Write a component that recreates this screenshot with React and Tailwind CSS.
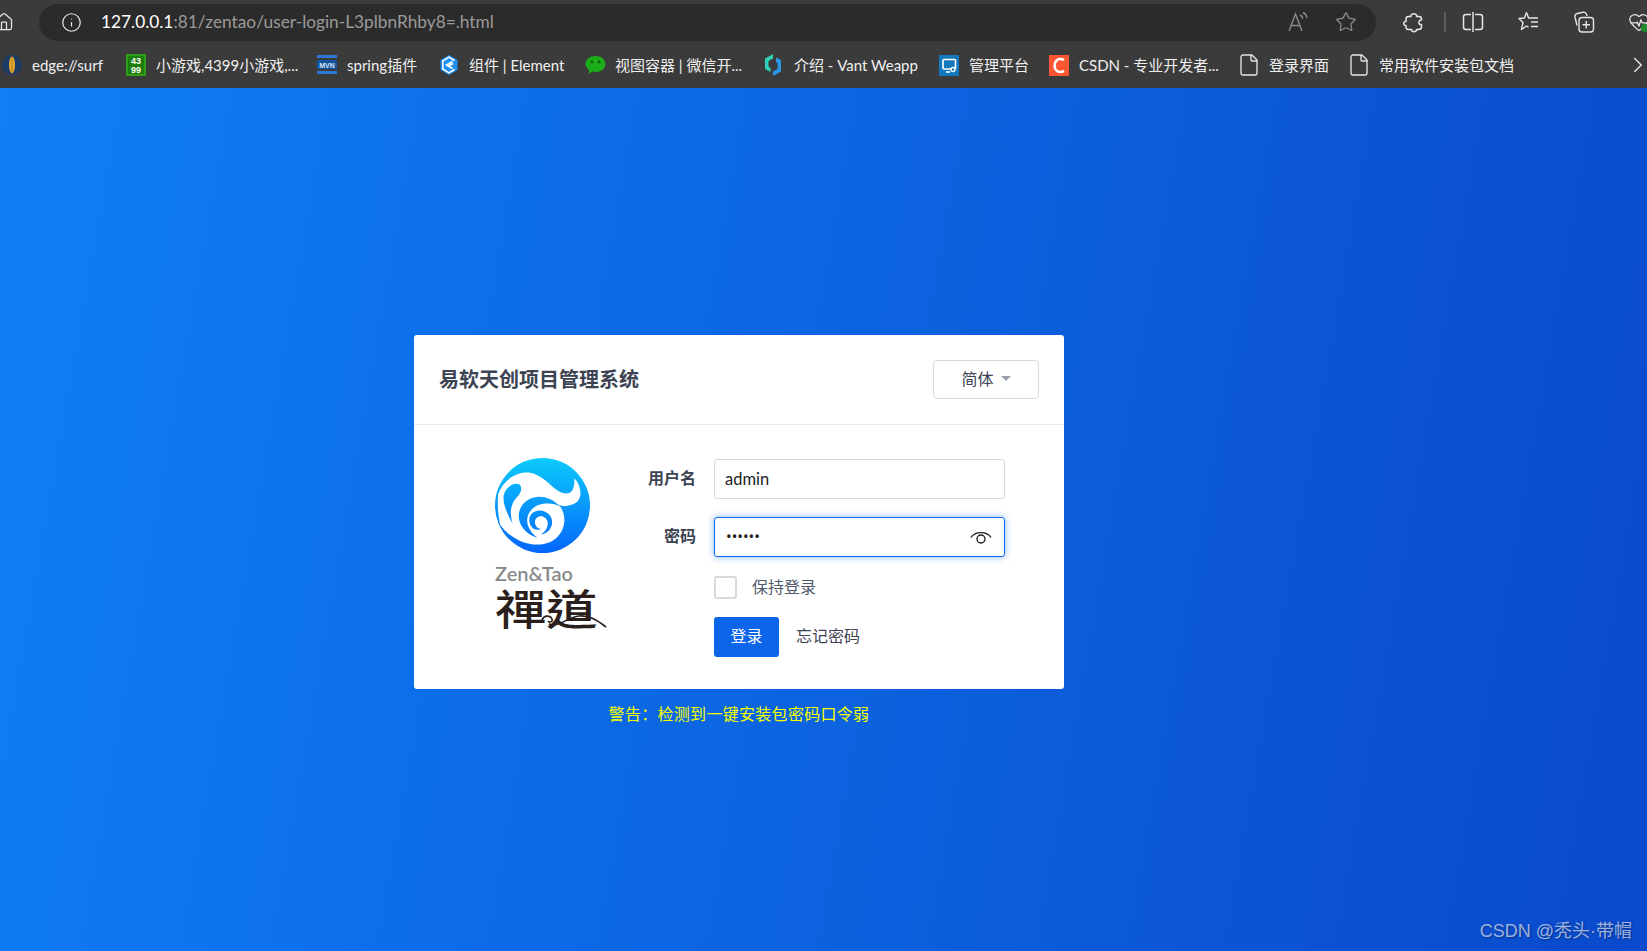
import { Home, Info, Star, ChevronRight, File, HeartPulse } from 'lucide-react';

function SurfIcon() {
  return (
    <svg width="20" height="20" viewBox="0 0 20 20">
      <circle cx="10" cy="10" r="10" fill="#1c3a63" />
      <ellipse cx="10" cy="10" rx="3" ry="8.5" fill="#e0a92c" />
      <line x1="10" y1="2" x2="10" y2="18" stroke="#a97a14" strokeWidth="0.8" />
    </svg>
  );
}

function GameIcon() {
  return (
    <svg width="20" height="22" viewBox="0 0 20 22">
      <rect width="20" height="22" fill="#2f9e16" />
      <rect x="2" y="2" width="16" height="18" fill="#1d7d0a" />
      <text x="10" y="10" fontSize="9" fontWeight="700" fill="#fff" textAnchor="middle" fontFamily="Liberation Sans">43</text>
      <text x="10" y="19" fontSize="9" fontWeight="700" fill="#fff" textAnchor="middle" fontFamily="Liberation Sans">99</text>
    </svg>
  );
}

function MavenIcon() {
  return (
    <svg width="20" height="20" viewBox="0 0 20 20">
      <rect y="0" width="20" height="3" fill="#2a78d6" />
      <rect y="16" width="20" height="3" fill="#2a78d6" />
      <rect y="5" width="20" height="9" fill="#12539b" />
      <text x="10" y="12.5" fontSize="7" fontWeight="700" fill="#d5e6fa" textAnchor="middle" fontFamily="Liberation Sans">MVN</text>
    </svg>
  );
}

function ElementIcon() {
  return (
    <svg width="20" height="22" viewBox="0 0 20 22">
      <path d="M10 1 L18.5 6 V16 L10 21 L1.5 16 V6 Z" fill="#1e8ff5" />
      <path d="M15.5 6.5 L10 3.2 L3.8 7 V15 L10 18.8 L15.5 15.5" stroke="#fff" strokeWidth="1.5" fill="none" />
      <path d="M13.5 7.5 L7.5 11 L13.5 14.5 M9.5 12 L14 9.5" stroke="#fff" strokeWidth="1.6" fill="none" />
    </svg>
  );
}

function WechatIcon() {
  return (
    <svg width="21" height="20" viewBox="0 0 21 20">
      <path d="M10.5 1 C16 1 20.5 4.4 20.5 9 C20.5 13.6 16 17 10.5 17 C9.4 17 8.4 16.9 7.4 16.6 L3.5 19 L4.2 15 C2 13.5 0.5 11.4 0.5 9 C0.5 4.4 5 1 10.5 1 Z" fill="#1aad19" />
      <circle cx="7" cy="7" r="1.4" fill="#0b5f0a" />
      <circle cx="14" cy="7" r="1.4" fill="#0b5f0a" />
    </svg>
  );
}

function VantIcon() {
  return (
    <svg width="18" height="22" viewBox="0 0 18 22">
      <path d="M9 0 L1 4.5 V15 L6.5 18 V14 L4.5 12.5 V7 L9 4.5 Z" fill="#2fd0b5" />
      <path d="M9 22 L17 17.5 V6 L12 3.5 V8 L13.5 9 V15 L9 17.5 Z" fill="#2a96e8" />
    </svg>
  );
}

function AdminIcon() {
  return (
    <svg width="20" height="21" viewBox="0 0 20 21">
      <rect width="20" height="21" fill="#1478be" />
      <rect x="4" y="4.5" width="12.5" height="9.5" rx="1" fill="none" stroke="#fff" strokeWidth="1.6" />
      <path d="M7 17 H11" stroke="#fff" strokeWidth="1.6" />
      <circle cx="14" cy="14.5" r="2" fill="#1478be" stroke="#fff" strokeWidth="1.3" />
    </svg>
  );
}

function CsdnIcon() {
  return (
    <svg width="20" height="21" viewBox="0 0 20 21">
      <rect width="20" height="21" fill="#fc5531" />
      <path d="M15 5.2 C13.8 4.4 12.6 4 11.2 4 C8 4 5.6 6.6 5.6 10.5 C5.6 14.4 8 17 11.2 17 C12.6 17 13.8 16.6 15 15.8" fill="none" stroke="#fff" strokeWidth="2.6" />
    </svg>
  );
}

function DocIcon() {
  return <File size={24} strokeWidth={1.3} className="-ml-[2px] text-[#e6e6e6]" />;
}

const BOOKMARKS = [
  { label: 'edge://surf', icon: <SurfIcon />, width: 'w-[124px]' },
  { label: '小游戏,4399小游戏,...', icon: <GameIcon />, width: 'w-[191px]' },
  { label: 'spring插件', icon: <MavenIcon />, width: 'w-[122px]' },
  { label: '组件 | Element', icon: <ElementIcon />, width: 'w-[146px]' },
  { label: '视图容器 | 微信开...', icon: <WechatIcon />, width: 'w-[179px]' },
  { label: '介绍 - Vant Weapp', icon: <VantIcon />, width: 'w-[175px]' },
  { label: '管理平台', icon: <AdminIcon />, width: 'w-[110px]' },
  { label: 'CSDN - 专业开发者...', icon: <CsdnIcon />, width: 'w-[190px]' },
  { label: '登录界面', icon: <DocIcon />, width: 'w-[110px]' },
  { label: '常用软件安装包文档', icon: <DocIcon />, width: 'w-[270px]' },
];

function ReadAloudIcon() {
  return (
    <svg width="24" height="24" viewBox="0 0 24 24" fill="none" stroke="#8b8b8b" strokeWidth="1.4">
      <path d="M3 21 L9.5 4 L16 21 M5.2 15.5 H13.8" />
      <path d="M14 5 C15.6 5.6 16.6 7 16.8 8.6 M17 2.5 C19.3 3.6 20.7 5.6 21 8.2" />
    </svg>
  );
}

function PuzzleIcon() {
  return (
    <svg width="22" height="22" viewBox="0 0 22 22" fill="none" stroke="#e6e6e6" strokeWidth="1.5" strokeLinejoin="round">
      <path d="M5.5 5.5 H8 C7 2 14.5 1.5 13.5 5.5 H15.5 Q18.5 5.5 18.5 8 V9 C15 8.5 15 14.5 18.5 13.5 V16 Q18.5 18.5 15.5 18.5 H13.5 C14 21.5 8 21.5 8.5 18.5 H5.5 Q3 18.5 3 16 V14.5 C0 15 0 10 3 10.5 V8 Q3 5.5 5.5 5.5 Z" />
    </svg>
  );
}

function SplitIcon() {
  return (
    <svg width="22" height="22" viewBox="0 0 22 22" fill="none" stroke="#e6e6e6" strokeWidth="1.5">
      <path d="M9 3.5 H4 A2.5 2.5 0 0 0 1.5 6 V16 A2.5 2.5 0 0 0 4 18.5 H9 M13 3.5 H18 A2.5 2.5 0 0 1 20.5 6 V16 A2.5 2.5 0 0 1 18 18.5 H13" />
      <path d="M11 1 V21" />
    </svg>
  );
}

function FavoritesIcon() {
  return (
    <svg width="22" height="22" viewBox="0 0 22 22" fill="none" stroke="#e6e6e6" strokeWidth="1.4" strokeLinejoin="round">
      <path d="M8.5 1.5 L10.6 7 H20" />
      <path d="M8.5 1.5 L6.4 7 L1 7.5 L5 11.5 L3.5 18.5 L8.5 15 L10.5 16.2" />
      <path d="M13 11 H20 M13 15.5 H20" />
    </svg>
  );
}

function CollectionsIcon() {
  return (
    <svg width="22" height="22" viewBox="0 0 22 22" fill="none" stroke="#e6e6e6" strokeWidth="1.4">
      <path d="M4 14.5 L2 6 A3 3 0 0 1 4.2 2.5 L10 1.2 A3 3 0 0 1 13.5 3.2 L14 5" />
      <rect x="6" y="6.5" width="14.5" height="14.5" rx="3" />
      <path d="M13.2 10 V17.5 M9.5 13.8 H17" />
    </svg>
  );
}

function EyeIcon() {
  return (
    <svg width="22" height="15" viewBox="0 0 22 15" fill="none" stroke="#222" strokeWidth="1.4">
      <path d="M1 7.5 C5 1 17 1 21 7.5" />
      <circle cx="11" cy="9" r="4" />
    </svg>
  );
}

function ZentaoLogo() {
  return (
    <div className="flex flex-col w-[112px] -mt-[1px]">
      <svg width="95" height="95" viewBox="36 29 266 266">
        <defs>
          <linearGradient id="ball" gradientUnits="userSpaceOnUse" x1="0" y1="29" x2="0" y2="295">
            <stop offset="0" stopColor="#0ccbfb" />
            <stop offset="1" stopColor="#0466fb" />
          </linearGradient>
        </defs>
        <circle cx="169" cy="162" r="133" fill="url(#ball)" />
        {/* cloud body */}
        <path
          d="M45 130 C60 85 110 58 150 75 C190 92 205 130 240 128 C255 125 260 105 258 85 C280 110 285 150 250 160 C235 165 225 165 215 160 C240 190 235 240 195 262 C150 285 85 265 50 215 C45 190 42 160 45 130 Z"
          fill="#fff"
        />
        <path
          d="M106 104 C90 95 65 110 60 135 C58 160 70 185 85 212 C78 185 78 165 92 145 C105 132 115 118 106 104 Z"
          fill="url(#ball)"
        />
        <path
          d="M218 165 C185 128 130 128 108 168 C92 200 112 240 155 252 C130 236 118 205 132 182 C150 152 195 152 218 165 Z"
          fill="url(#ball)"
        />
        <path
          d="M132 205 C130 175 170 165 190 190 C205 212 190 240 165 243 C182 232 190 212 178 198 C165 185 145 195 148 212 C150 222 158 228 165 228 C150 235 134 225 132 205 Z"
          fill="url(#ball)"
        />
      </svg>
      <span className="mt-[8px] text-[20px] leading-[24px] font-semibold text-[#8a8a8a] font-['Lato',sans-serif]">Zen&amp;Tao</span>
      <div className="relative h-[46px] -mt-[1px]">
        <span className="block origin-left scale-x-[1.22] text-[42px] leading-[46px] font-medium text-[#2a1f1c] font-['Noto_Sans_CJK_TC',sans-serif]">禪道</span>
        <svg className="absolute left-[46px] top-[24px]" width="66" height="20" viewBox="0 0 66 20" fill="none" stroke="#2a1f1c" strokeWidth="1.6">
          <path d="M1 12 C3 7 9 7 11 11 C12 14 8 15 7 13 M8 16 C18 20 26 9 38 8 C48 7 56 12 65 19" />
        </svg>
      </div>
    </div>
  );
}

export default function App() {
  return (
    <div className="relative flex flex-col h-screen w-full overflow-hidden font-['Lato','Noto_Sans_CJK_SC',sans-serif]">
      {/* Browser toolbar */}
      <div className="bg-[#3b3b3b] shrink-0 h-[88px]">
        <div className="flex items-center h-[42px] pt-[2px]">
          <Home size={20} strokeWidth={1.5} className="-ml-[6px] text-[#e6e6e6] shrink-0" />
          <div className="ml-[25px] w-[1337px] h-[37px] shrink-0 rounded-full bg-[#2b2b2b] flex items-center">
            <Info size={21} strokeWidth={1.4} className="ml-[22px] text-[#e6e6e6]" />
            <div className="ml-[19px] flex-1 text-[17.3px] whitespace-nowrap text-[#9a9a9a]">
              <span className="text-white">127.0.0.1</span>:81/zentao/user-login-L3plbnRhby8=.html
            </div>
            <ReadAloudIcon />
            <Star size={22} strokeWidth={1.4} className="ml-[25px] mr-[19px] text-[#8b8b8b]" />
          </div>
          <div className="ml-[27px] shrink-0"><PuzzleIcon /></div>
          <div className="ml-[19px] w-[2px] h-[20px] shrink-0 bg-[#5c5c5c]" />
          <div className="ml-[16px] shrink-0"><SplitIcon /></div>
          <div className="ml-[34px] shrink-0"><FavoritesIcon /></div>
          <div className="ml-[33px] shrink-0"><CollectionsIcon /></div>
          <div className="relative ml-[33px] shrink-0">
            <HeartPulse size={22} strokeWidth={1.4} className="text-[#e6e6e6]" />
            <span className="absolute left-[13px] top-[13px] w-[8px] h-[8px] rounded-full bg-[#1f8a2e]" />
          </div>
        </div>
        {/* Bookmarks bar */}
        <div className="flex items-center h-[46px] pl-[2px] text-[15px] text-[#f0f0f0] whitespace-nowrap relative">
          {BOOKMARKS.map((b) => (
            <div key={b.label} className={`flex items-center shrink-0 ${b.width}`}>
              <span className="w-[30px] flex items-center shrink-0">{b.icon}</span>
              <span>{b.label}</span>
            </div>
          ))}
          <ChevronRight size={26} strokeWidth={1.3} className="absolute -right-[4px] text-[#e6e6e6]" />
        </div>
      </div>

      {/* Login page */}
      <div className="flex-1 bg-linear-[100deg,#0f7ef7,#0a49cb] pt-[247px] pl-[414px]">
        <div className="w-[650px]">
          <div className="bg-white rounded-[3px] h-[354px]">
            <div className="h-[90px] flex items-center justify-between px-[25px] border-b border-[#e9ecf0]">
              <h1 className="pb-[2px] text-[20px] font-bold text-[#3c4353]">易软天创项目管理系统</h1>
              <button className="w-[106px] h-[39px] pb-[2px] flex items-center justify-center gap-[7px] border border-[#d5dbe5] rounded-[4px] text-[16px] text-[#3c4353]">
                简体
                <span className="w-0 h-0 border-x-[5px] border-x-transparent border-t-[5px] border-t-[#9aa0ab]" />
              </button>
            </div>
            <div className="flex pt-[34px]">
              <div className="w-[206px] pl-[81px]">
                <ZentaoLogo />
              </div>
              <div className="grid grid-cols-[76px_291px] gap-x-[18px] items-center text-[16px] text-[#3c4353]">
                <label className="text-right font-bold pb-[2px]">用户名</label>
                <input
                  defaultValue="admin"
                  className="h-[40px] w-full px-[10px] rounded-[3px] border border-[#d9d9d9] text-[16.5px] text-[#222] outline-none"
                />
                <label className="text-right font-bold mt-[18px] pb-[2px]">密码</label>
                <div className="relative mt-[18px]">
                  <input
                    type="password"
                    defaultValue="123456"
                    className="h-[40px] w-full px-[11px] pb-[2px] rounded-[3px] border border-[#0d6aec] shadow-[0_0_7px_rgba(13,106,236,0.5)] text-[15px] text-[#222] outline-none font-['Noto_Sans',sans-serif]"
                  />
                  <span className="absolute right-[13px] top-[13px]"><EyeIcon /></span>
                </div>
                <div className="col-start-2 flex items-center mt-[19px] h-[23px]">
                  <span className="w-[23px] h-[23px] rounded-[3px] border-2 border-[#d9d9d9]" />
                  <span className="ml-[15px] pb-[2px] text-[#50586a]">保持登录</span>
                </div>
                <div className="col-start-2 flex items-center mt-[18px]">
                  <button className="w-[65px] h-[40px] pb-[2px] rounded-[3px] bg-[#0d66ea] text-white">登录</button>
                  <span className="ml-[17px] pb-[2px] text-[#3c4353]">忘记密码</span>
                </div>
              </div>
            </div>
          </div>
          <p className="mt-[13px] text-center text-[16px] tracking-[0.3px] leading-[24px] text-[#f4ff00]">警告：检测到一键安装包密码口令弱</p>
        </div>
      </div>

      {/* Watermark */}
      <span className="absolute right-[15px] bottom-[6px] text-[18px] text-[#ffffff99] [text-shadow:1px_1px_2px_rgba(0,0,0,0.35)] font-['Liberation_Sans','Noto_Sans_CJK_SC',sans-serif]">
        CSDN @秃头·带帽
      </span>
    </div>
  );
}
